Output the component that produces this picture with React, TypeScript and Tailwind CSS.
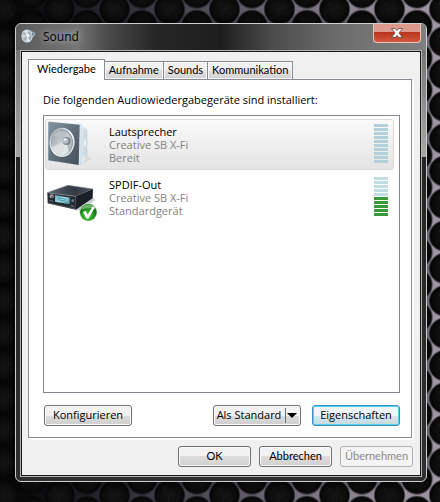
import React from "react";
import clsx from "clsx";

type Device = {
    name: string;
    card: string;
    status: string;
    level: number;
    icon: React.ReactNode;
};

const Wallpaper = () => (
    <svg className="absolute inset-0 h-full w-full" aria-hidden="true">
        <defs>
            <linearGradient id="light" x1="0" y1="0" x2="1" y2="0">
                <stop offset="0" stopColor="#050507" />
                <stop offset="0.12" stopColor="#100f13" />
                <stop offset="0.25" stopColor="#2b2930" />
                <stop offset="0.5" stopColor="#56525c" />
                <stop offset="0.8" stopColor="#8a8390" />
                <stop offset="1" stopColor="#a098a4" />
            </linearGradient>
            <radialGradient id="hole">
                <stop offset="0" stopColor="#151415" />
                <stop offset="0.8" stopColor="#0c0b0c" />
                <stop offset="1" stopColor="#040404" />
            </radialGradient>
            <pattern id="mesh" x="362" y="-7" width="55" height="32.4" patternUnits="userSpaceOnUse">
                <g fill="url(#hole)" stroke="#08070a" strokeOpacity="0.5" strokeWidth="2">
                    <circle cx="27.5" cy="16.2" r="14.7" />
                    <circle cx="0" cy="0" r="14.7" />
                    <circle cx="55" cy="0" r="14.7" />
                    <circle cx="0" cy="32.4" r="14.7" />
                    <circle cx="55" cy="32.4" r="14.7" />
                </g>
                <g fill="#2a2829">
                    <rect x="22" y="10" width="1" height="1" />
                    <rect x="31" y="14" width="1" height="1" />
                    <rect x="26" y="21" width="1" height="1" />
                    <rect x="34" y="20" width="1" height="1" />
                    <rect x="4" y="5" width="1" height="1" />
                    <rect x="49" y="3" width="1" height="1" />
                    <rect x="6" y="27" width="1" height="1" />
                    <rect x="50" y="26" width="1" height="1" />
                </g>
            </pattern>
        </defs>
        <rect width="100%" height="100%" fill="url(#light)" />
        <rect width="100%" height="100%" fill="url(#mesh)" />
    </svg>
);

const SoundIcon = () => (
    <svg className="h-4 w-4" viewBox="0 0 16 16" aria-hidden="true">
        <path d="M7 1.5 L12 3 L15 5 L14 8 L12 9.5 L9 14 Z" fill="#77818a" />
        <path d="M10 4 L14 5 L13 8 L10 9 Z" fill="#b3bec7" />
        <path d="M11 5 L13 6 L11.5 8 Z" fill="#49525a" />
        <ellipse cx="6" cy="8" rx="5.6" ry="6.6" fill="#d3dade" />
        <ellipse cx="6" cy="8" rx="4.6" ry="5.6" fill="#a3b0ba" />
        <path d="M6 8 L3 3 A5 6 0 0 1 7 2.4 Z M6 8 L9 13 A5 6 0 0 1 5 13.4 Z" fill="#dfe7ec" />
        <path d="M6 8 L1.5 6.5 L1.5 10 Z" fill="#d8dee3" />
        <ellipse cx="7" cy="7.5" rx="1.6" ry="1.8" fill="#f4f7f9" />
    </svg>
);

const SpeakerIcon = () => (
    <svg className="h-12 w-12" viewBox="18 15 144 144" aria-hidden="true">
        <defs>
            <linearGradient id="front" x1="0" y1="0" x2="1" y2="1">
                <stop offset="0" stopColor="#8595a3" />
                <stop offset="0.45" stopColor="#64727e" />
                <stop offset="1" stopColor="#434f59" />
            </linearGradient>
            <linearGradient id="side" x1="0" y1="0" x2="1" y2="0">
                <stop offset="0" stopColor="#b9cad6" />
                <stop offset="0.5" stopColor="#e8f0f5" />
                <stop offset="1" stopColor="#c3d0da" />
            </linearGradient>
            <linearGradient id="rim" x1="0" y1="0" x2="1" y2="1">
                <stop offset="0" stopColor="#8f9ba5" />
                <stop offset="0.5" stopColor="#ffffff" />
                <stop offset="1" stopColor="#c4ccd2" />
            </linearGradient>
            <linearGradient id="cone" x1="0" y1="0" x2="1" y2="1">
                <stop offset="0" stopColor="#8f979d" />
                <stop offset="0.5" stopColor="#c9ced1" />
                <stop offset="1" stopColor="#a3abb1" />
            </linearGradient>
        </defs>
        <path d="M110 147 L140 124 L156 132 L126 148 Z" fill="#d9dadb" />
        <path d="M121 26 L142 44 L142 122 L124 150 L117 150 Z" fill="url(#side)" />
        <path d="M128 38 L136 47 L136 118 L127 130 Z" fill="#c9d7e1" opacity="0.7" />
        <path d="M133 70 Q144 82 133 96 Z" fill="#f6fafc" />
        <path d="M24 19 L117 27 L124 29 L121 152 L114 151 L24 137 Z" fill="#dce6ed" />
        <path d="M25 20 L119 29 L116 150 L25 136 Z" fill="url(#front)" />
        <ellipse cx="67" cy="84" rx="40" ry="45" fill="#414b54" opacity="0.5" />
        <ellipse cx="66" cy="82" rx="38" ry="44" fill="url(#rim)" />
        <ellipse cx="66" cy="82" rx="33" ry="39" fill="#8c969e" />
        <ellipse cx="65" cy="83" rx="31" ry="37" fill="url(#cone)" />
        <path d="M79 78 L40 62 A31 37 0 0 1 62 46 Z" fill="#b9bfc3" />
        <path d="M79 78 L36 96 A31 37 0 0 0 62 120 Z" fill="#dde0e2" />
        <path d="M79 78 L62 120 A31 37 0 0 0 86 110 Z" fill="#eef0f1" opacity="0.8" />
        <circle cx="80" cy="78" r="12" fill="#76808a" />
        <circle cx="77" cy="77" r="9" fill="#b5bcc2" />
        <circle cx="75" cy="74" r="4" fill="#e4e8eb" />
    </svg>
);

const ReceiverIcon = () => (
    <svg className="h-12 w-12 overflow-visible" viewBox="18 -6 144 144" aria-hidden="true">
        <defs>
            <linearGradient id="lid" x1="0" y1="0" x2="1" y2="0">
                <stop offset="0" stopColor="#5a626c" />
                <stop offset="0.6" stopColor="#343a42" />
                <stop offset="1" stopColor="#4e5660" />
            </linearGradient>
            <linearGradient id="display" x1="0" y1="0" x2="1" y2="1">
                <stop offset="0" stopColor="#5fa6b8" />
                <stop offset="0.5" stopColor="#9fdde8" />
                <stop offset="1" stopColor="#3c8698" />
            </linearGradient>
            <radialGradient id="badge" cx="0.45" cy="0.7">
                <stop offset="0" stopColor="#5fd14a" />
                <stop offset="0.6" stopColor="#2ca32b" />
                <stop offset="1" stopColor="#16771c" />
            </radialGradient>
        </defs>
        <path d="M108 106 L160 68 L164 76 L126 108 Z" fill="#c9cbcd" />
        <path d="M22 53 L84 31 L159 42 L107 64 Z" fill="url(#lid)" />
        <path d="M22 53 L84 31 L159 42" fill="none" stroke="#7b838c" strokeWidth="2" />
        <path d="M107 64 L159 42 L158 70 L108 104 Z" fill="#1b2027" />
        <path d="M22 53 L107 64 L108 104 L23 85 Z" fill="#252b33" />
        <path d="M22 53 L107 64" stroke="#8b939b" strokeWidth="2" />
        <path d="M24 84 L107 102" stroke="#606870" strokeWidth="2" />
        <path d="M45 60 L89 68 L89 88 L45 80 Z" fill="url(#display)" />
        <path d="M55 68 L78 73 M55 74 L74 78" stroke="#2b7485" strokeWidth="2" />
        <circle cx="35" cy="64" r="6" fill="#a6adb4" />
        <circle cx="36" cy="65" r="3" fill="#a13b3f" />
        <path d="M28 76 L40 79" stroke="#8a939b" strokeWidth="2" />
        <circle cx="98" cy="77" r="4" fill="#75808a" />
        <path d="M92 92 L103 94" stroke="#9aa2aa" strokeWidth="2" />
        <circle cx="145" cy="112" r="27" fill="#c6e6c0" />
        <circle cx="145" cy="112" r="25" fill="url(#badge)" />
        <path d="M123 104 A23 23 0 0 1 166 103 Q146 96 123 104 Z" fill="#a5dc9b" opacity="0.6" />
        <path d="M129 112 L137 107 L143 119 L158 94 L165 97 L145 131 L140 131 Z" fill="#ffffff" />
    </svg>
);

const devices: Device[] = [
    { name: "Lautsprecher", card: "Creative SB X-Fi", status: "Bereit", level: 0, icon: <SpeakerIcon /> },
    { name: "SPDIF-Out", card: "Creative SB X-Fi", status: "Standardgerät", level: 5, icon: <ReceiverIcon /> },
];

const tabs = ["Wiedergabe", "Aufnahme", "Sounds", "Kommunikation"];

const LevelMeter = ({ level, dimmed }: { level: number; dimmed: boolean }) => (
    <div className="mt-1 flex w-[14px] flex-col gap-px" role="img" aria-label="Pegel">
        {Array.from({ length: 10 }, (_, i) => (
            <div
                key={i}
                className={clsx(
                    "h-[3px]",
                    i >= 10 - level ? "bg-[#38993a]" : dimmed ? "bg-[#b6d0d9]" : "bg-[#c3dce2]"
                )}
            />
        ))}
    </div>
);

const DeviceRow = ({
    device,
    selected,
    onSelect,
}: {
    device: Device;
    selected: boolean;
    onSelect: () => void;
}) => (
    <button
        type="button"
        onClick={onSelect}
        className={clsx(
            "flex h-[51px] w-full items-start rounded-[3px] border pr-[5px] text-left",
            selected
                ? "border-[#d9d9d9] bg-linear-to-b from-[#fafafa] to-[#e4e4e4]"
                : "border-transparent"
        )}
    >
        {device.icon}
        <span className="mt-[5px] ml-[15px] flex grow flex-col leading-[13px] text-[#838383]">
            <span className="text-black">{device.name}</span>
            <span>{device.card}</span>
            <span>{device.status}</span>
        </span>
        <LevelMeter level={device.level} dimmed={selected} />
    </button>
);

const DialogButton = ({
    children,
    className,
    focused,
    disabled,
}: {
    children: React.ReactNode;
    className?: string;
    focused?: boolean;
    disabled?: boolean;
}) => (
    <button
        type="button"
        disabled={disabled}
        className={clsx(
            "flex h-[21px] items-center justify-center rounded-[3px] border whitespace-nowrap",
            disabled && "border-[#adb2b5] bg-[#f4f4f4] text-[#8a8a8a]",
            focused &&
                "border-[#3c93b8] bg-linear-to-b from-[#eff5f8] from-50% via-[#d9e7ed] via-50% to-[#c3d9e3] shadow-[inset_0_0_0_1px_#55d0f3]",
            !disabled &&
                !focused &&
                "border-[#707070] bg-linear-to-b from-[#f2f2f2] from-50% via-[#dddddd] via-50% to-[#cfcfcf] shadow-[inset_0_0_0_1px_#fafafa]",
            className
        )}
    >
        {children}
    </button>
);

function App() {
    const [activeTab, setActiveTab] = React.useState("Wiedergabe");
    const [selected, setSelected] = React.useState("Lautsprecher");

    return (
        <div className="relative min-h-screen overflow-hidden bg-black pt-[23px] pr-[13px] pb-5 pl-[15px] font-['Open_Sans','Noto_Sans',sans-serif] text-[11px] text-black">
            <Wallpaper />
            <div className="relative rounded-md border border-[#cfcfcf] bg-[linear-gradient(to_bottom,#6a6a6a_0,#a6a6a6_133px,#242424_133px,#303030_100%)] px-1 pb-1 shadow-[0_0_6px_1px_rgba(0,0,0,0.6)]">
                <div className="-mx-1 flex h-[26px] items-start rounded-t-[5px] bg-[linear-gradient(to_right,#5c5c5c_0,#747474_15%,#4c4c4c_22%,#262626_34%,#1e1e1e_50%,#4a4a4a_62%,#6c6c6c_78%,#808080_100%)] pr-[5px] pl-[5px]">
                    <div className="mt-1">
                        <SoundIcon />
                    </div>
                    <h1 className="ml-[6px] grow text-xs leading-[26px] [text-shadow:0_0_6px_#b8b8b8,0_0_10px_#a8a8a8]">
                        Sound
                    </h1>
                    <button
                        type="button"
                        aria-label="Schließen"
                        className="flex h-[19px] w-12 items-center justify-center rounded-b-[4px] border border-t-0 border-[#e8c4bc] bg-linear-to-b from-[#dc9a8c] from-45% via-[#b9321c] via-45% to-[#d2583c]"
                    >
                        <svg className="h-[10px] w-3" viewBox="0 0 12 10" aria-hidden="true">
                            <path
                                d="M0.5 0.5 H4.2 L6 2.6 L7.8 0.5 H11.5 L8 5 L11.5 9.5 H7.8 L6 7.4 L4.2 9.5 H0.5 L4 5 Z"
                                fill="#ffffff"
                                stroke="#54433f"
                                strokeWidth="0.8"
                            />
                        </svg>
                    </button>
                </div>

                <div className="border border-[#b5b5b5]">
                    <div className="border border-[#161616] bg-[#f0f0f0] px-[6px] pt-[7px] pb-2">
                        <div role="tablist" className="flex items-end font-[Lato,sans-serif]">
                            {tabs.map((tab) => (
                                <button
                                    key={tab}
                                    type="button"
                                    role="tab"
                                    aria-selected={tab === activeTab}
                                    onClick={() => setActiveTab(tab)}
                                    className={clsx(
                                        "border border-b-0 border-[#898c95]",
                                        tab === activeTab
                                            ? "relative -mb-px h-[21px] bg-white px-2 pb-[2px]"
                                            : "-ml-px h-[18px] bg-linear-to-b from-[#f2f2f2] from-50% via-[#e2e2e2] via-50% to-[#d2d2d2] px-1 shadow-[inset_0_0_0_1px_#f7f7f7]"
                                    )}
                                >
                                    {tab}
                                </button>
                            ))}
                        </div>

                        <div className="mr-[2px] border border-[#898c95] bg-white pt-3 pr-[11px] pb-[11px] pl-[14px] shadow-[2px_2px_0_#ffffff]">
                            <p className="leading-4">
                                Die folgenden Audiowiedergabegeräte sind installiert:
                            </p>
                            <div className="mt-[7px] flex h-[278px] flex-col gap-[2px] border border-[#828790] pt-[3px] pr-[5px] pl-px">
                                {devices.map((device) => (
                                    <DeviceRow
                                        key={device.name}
                                        device={device}
                                        selected={device.name === selected}
                                        onSelect={() => setSelected(device.name)}
                                    />
                                ))}
                            </div>
                            <div className="mt-3 flex pl-px">
                                <DialogButton className="w-[88px]">Konfigurieren</DialogButton>
                                <DialogButton className="ml-auto w-[88px]">
                                    <span>Als Standard</span>
                                    <span className="ml-1 flex h-[15px] items-center border-l border-[#707070]">
                                        <svg className="h-[5px] w-[11px]" viewBox="0 0 11 5" aria-hidden="true">
                                            <path d="M1 0 H11 L6 5 Z" fill="#000000" />
                                        </svg>
                                    </span>
                                </DialogButton>
                                <DialogButton focused className="ml-[11px] w-[88px]">
                                    Eigenschaften
                                </DialogButton>
                            </div>
                        </div>

                        <div className="mt-2 mr-px flex justify-end gap-2 font-[Lato,sans-serif]">
                            <DialogButton className="w-[73px]">OK</DialogButton>
                            <DialogButton className="w-[73px]">Abbrechen</DialogButton>
                            <DialogButton disabled className="w-[73px]">
                                Übernehmen
                            </DialogButton>
                        </div>
                    </div>
                </div>
            </div>
        </div>
    );
}

export default App;
